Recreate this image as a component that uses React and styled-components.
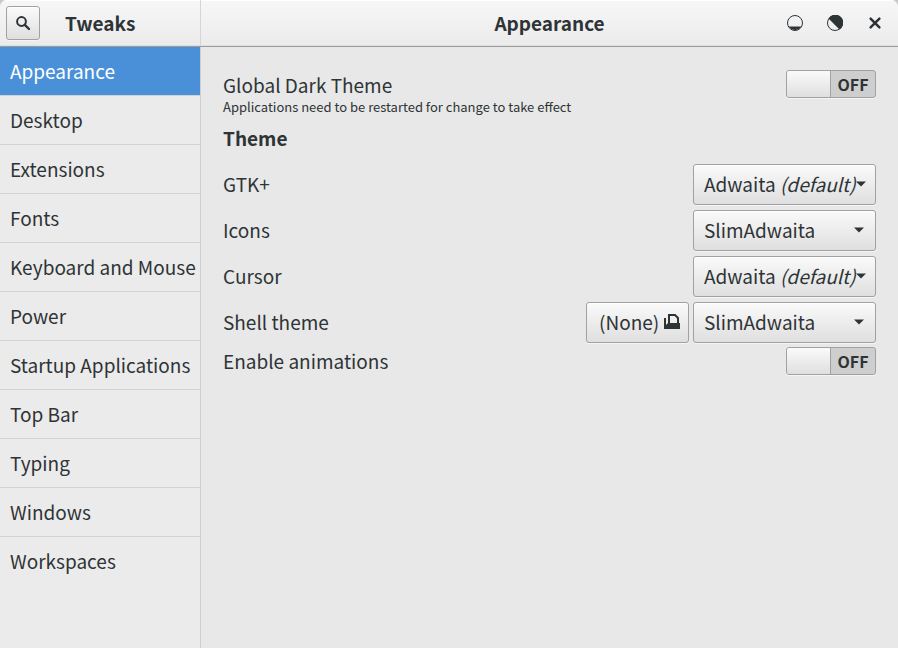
import React from 'react';
import styled, { createGlobalStyle } from 'styled-components';

const Global = createGlobalStyle`
  * { box-sizing: border-box; }
  body { margin: 0; background: #c9c9c9; }
  button { font: inherit; color: inherit; margin: 0; }
`;

const Window = styled.div`
  width: 898px;
  height: 648px;
  display: grid;
  grid-template-rows: 47px 1fr;
  overflow: hidden;
  border-radius: 7px 7px 0 0;
  background: #e8e8e8;
  color: #2e3436;
  font: 19px/26px 'Noto Sans CJK SC', 'Noto Sans', sans-serif;
`;

const HeaderBar = styled.header`
  display: grid;
  grid-template-columns: 201px 1fr;
  background: linear-gradient(#f7f7f7, #ebebeb);
  border-bottom: 1px solid #9c9c9c;
  box-shadow: inset 0 1px #fff, inset 0 -1px #dedede;
`;

const HeaderLeft = styled.div`
  display: flex;
  align-items: center;
  padding-left: 6px;
  border-right: 1px solid #d5d5d5;
`;

const HeaderRight = styled.div`
  display: grid;
  grid-template-columns: 1fr auto 1fr;
  align-items: center;
`;

const Title = styled.h1`
  margin: 0;
  font-size: 19px;
  line-height: 26px;
  font-weight: 700;
`;

const LeftTitle = styled(Title)`
  margin-left: 25px;
`;

const RightTitle = styled(Title)`
  grid-column: 2;
`;

const raised = `
  border: 1px solid #a1a1a1;
  border-radius: 3px;
  background: linear-gradient(#fafafa, #dfdfdf);
  box-shadow: inset 0 1px #fff, 0 1px #f5f5f5;
`;

const SearchButton = styled.button`
  ${raised}
  width: 34px;
  height: 34px;
  padding: 0;
  display: grid;
  place-items: center;
`;

const WindowControls = styled.div`
  display: flex;
  justify-content: flex-end;
  gap: 24px;
  padding-right: 15px;
`;

const ControlButton = styled.button`
  width: 16px;
  height: 16px;
  padding: 0;
  border: 0;
  background: none;
  display: grid;
`;

const Body = styled.div`
  display: grid;
  grid-template-columns: 201px 1fr;
`;

const Sidebar = styled.nav`
  background: #ebebeb;
  border-right: 1px solid #cfcfcf;
`;

const SidebarItem = styled.div`
  height: 49px;
  padding: 0 10px;
  display: flex;
  align-items: center;
  white-space: nowrap;
  border-bottom: 1px solid ${(p) => (p.$last ? 'transparent' : '#d2d2d2')};
  background: ${(p) => (p.$active ? '#4a90d9' : 'transparent')};
  background-clip: padding-box;
  color: ${(p) => (p.$active ? '#fff' : 'inherit')};
`;

const Panel = styled.main`
  padding: 23px 22px;
`;

const Row = styled.div`
  height: ${(p) => p.$height || 46}px;
  display: flex;
  align-items: ${(p) => (p.$top ? 'flex-start' : 'center')};
  justify-content: space-between;
`;

const Description = styled.div`
  padding-top: 2px;
`;

const Hint = styled.div`
  font-size: 13px;
  line-height: 18px;
`;

const SectionTitle = styled.h2`
  margin: 0;
  height: 36px;
  font-size: 19px;
  line-height: 26px;
`;

const Controls = styled.div`
  display: flex;
  gap: 4px;
`;

const Combo = styled.button`
  ${raised}
  width: 183px;
  height: 41px;
  padding: 0 11px 0 10px;
  display: flex;
  align-items: center;
  justify-content: space-between;
  white-space: nowrap;
`;

const FileButton = styled.button`
  ${raised}
  width: 103px;
  height: 41px;
  padding: 0 8px 0 12px;
  display: flex;
  align-items: center;
  justify-content: space-between;
`;

const Switch = styled.div`
  width: 90px;
  height: 28px;
  display: grid;
  grid-template-columns: 44px 1fr;
  border: 1px solid #a1a1a1;
  border-radius: 3px;
  background: #cecece;
  box-shadow: 0 1px #f5f5f5;
  overflow: hidden;
`;

const Knob = styled.div`
  border-right: 1px solid #a1a1a1;
  background: linear-gradient(#fafafa, #dfdfdf);
`;

const SwitchLabel = styled.span`
  font-size: 16px;
  line-height: 26px;
  font-weight: 700;
  text-align: center;
`;

const Icon = styled.svg`
  display: block;
  flex: none;
`;

const SearchIcon = () => (
  <Icon width="16" height="16" viewBox="0 0 16 16" fill="none" stroke="#2e3436">
    <circle cx="6.5" cy="6.5" r="4.4" strokeWidth="2" />
    <path d="M9.8 9.8L14 14" strokeWidth="2.4" strokeLinecap="round" />
  </Icon>
);

const MinimizeIcon = () => (
  <Icon width="16" height="16" viewBox="0 0 16 16">
    <circle cx="8" cy="8" r="7.5" fill="none" stroke="#2e3436" />
    <path d="M1.7 11.5h12.6A7.5 7.5 0 0 1 1.7 11.5z" fill="#2e3436" />
  </Icon>
);

const MaximizeIcon = () => (
  <Icon width="16" height="16" viewBox="0 0 16 16">
    <circle cx="8" cy="8" r="7.5" fill="none" stroke="#2e3436" />
    <path d="M1.5 3.5L12.5 14.5A8 8 0 1 0 1.5 3.5z" fill="#2e3436" />
  </Icon>
);

const CloseIcon = () => (
  <Icon width="16" height="16" viewBox="0 0 16 16">
    <path d="M3.6 3.6L12.4 12.4M12.4 3.6L3.6 12.4" stroke="#2e3436" strokeWidth="2.5" strokeLinecap="round" />
  </Icon>
);

const ArrowIcon = () => (
  <Icon width="10" height="6" viewBox="0 0 10 6">
    <path d="M0 .5h10L5 5.5z" fill="#2e3436" />
  </Icon>
);

const OpenIcon = () => (
  <Icon width="16" height="16" viewBox="0 0 16 16">
    <path d="M0 4h2v7l2-2h12v6H0z" fill="#2e3436" />
    <path d="M5 9V1h6l3 3v5" fill="none" stroke="#2e3436" strokeWidth="2" />
  </Icon>
);

const sections = [
  'Appearance', 'Desktop', 'Extensions', 'Fonts', 'Keyboard and Mouse', 'Power',
  'Startup Applications', 'Top Bar', 'Typing', 'Windows', 'Workspaces',
];

const OffSwitch = () => (
  <Switch role="switch" aria-checked="false">
    <Knob />
    <SwitchLabel>OFF</SwitchLabel>
  </Switch>
);

const ThemeCombo = ({ name, isDefault }) => (
  <Combo>
    <span>{name}{isDefault && <em> (default)</em>}</span>
    <ArrowIcon />
  </Combo>
);

export default function App() {
  return (
    <>
      <Global />
      <Window>
        <HeaderBar>
          <HeaderLeft>
            <SearchButton aria-label="Search"><SearchIcon /></SearchButton>
            <LeftTitle>Tweaks</LeftTitle>
          </HeaderLeft>
          <HeaderRight>
            <RightTitle>Appearance</RightTitle>
            <WindowControls>
              <ControlButton aria-label="Minimize"><MinimizeIcon /></ControlButton>
              <ControlButton aria-label="Maximize"><MaximizeIcon /></ControlButton>
              <ControlButton aria-label="Close"><CloseIcon /></ControlButton>
            </WindowControls>
          </HeaderRight>
        </HeaderBar>
        <Body>
          <Sidebar>
            {sections.map((name, i) => (
              <SidebarItem key={name} $active={i === 0} $last={i === sections.length - 1}>{name}</SidebarItem>
            ))}
          </Sidebar>
          <Panel>
            <Row $height={55} $top>
              <Description>
                Global Dark Theme
                <Hint>Applications need to be restarted for change to take effect</Hint>
              </Description>
              <OffSwitch />
            </Row>
            <SectionTitle>Theme</SectionTitle>
            <Row>GTK+<ThemeCombo name="Adwaita" isDefault /></Row>
            <Row>Icons<ThemeCombo name="SlimAdwaita" /></Row>
            <Row>Cursor<ThemeCombo name="Adwaita" isDefault /></Row>
            <Row>
              Shell theme
              <Controls>
                <FileButton>(None)<OpenIcon /></FileButton>
                <ThemeCombo name="SlimAdwaita" />
              </Controls>
            </Row>
            <Row $height={32}>Enable animations<OffSwitch /></Row>
          </Panel>
        </Body>
      </Window>
    </>
  );
}
